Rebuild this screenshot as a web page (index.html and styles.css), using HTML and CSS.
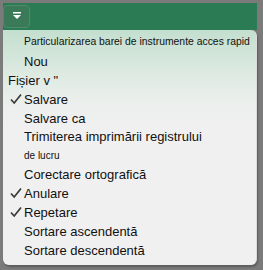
FILE: index.html
```html
<!DOCTYPE html>
<html>
<head>
<meta charset="utf-8">
<link rel="stylesheet" href="styles.css">
</head>
<body>
<div class="app">
  <div class="ribbon">
    <div class="qat-btn">
      <svg width="12" height="10" viewBox="0 0 12 10"><rect x="2" y="1" width="8" height="1.5" fill="#fff"/><path d="M2 4 L10 4 L6 8 Z" fill="#fff"/></svg>
    </div>
  </div>
  <div class="menu">
    <div class="heading">Particularizarea barei de instrumente acces rapid</div>
    <div class="item"><span class="label">Nou</span></div>
    <div class="item outdent"><span class="label">Fișier v "</span></div>
    <div class="item"><span class="check"><svg width="12" height="12" viewBox="0 0 12 12"><path d="M1 6.5 L4.2 10 L11 1.5" fill="none" stroke="#3a3a3a" stroke-width="1.7"/></svg></span><span class="label">Salvare</span></div>
    <div class="item"><span class="label">Salvare ca</span></div>
    <div class="item tight"><span class="label">Trimiterea imprimării registrului</span></div>
    <div class="item small"><span class="label">de lucru</span></div>
    <div class="item"><span class="label">Corectare ortografică</span></div>
    <div class="item"><span class="check"><svg width="12" height="12" viewBox="0 0 12 12"><path d="M1 6.5 L4.2 10 L11 1.5" fill="none" stroke="#3a3a3a" stroke-width="1.7"/></svg></span><span class="label">Anulare</span></div>
    <div class="item"><span class="check"><svg width="12" height="12" viewBox="0 0 12 12"><path d="M1 6.5 L4.2 10 L11 1.5" fill="none" stroke="#3a3a3a" stroke-width="1.7"/></svg></span><span class="label">Repetare</span></div>
    <div class="item"><span class="label">Sortare ascendentă</span></div>
    <div class="item"><span class="label">Sortare descendentă</span></div>
  </div>
</div>
</body>
</html>
```

FILE: styles.css
```css
html, body {
  margin: 0;
  padding: 0;
  background: #7b7b7b;
  width: 263px;
  height: 270px;
  overflow: hidden;
}
.app {
  padding: 3px 6px 0 3px;
  font-family: "Liberation Sans", Arial, sans-serif;
  color: #111;
}
.ribbon {
  height: 27px;
  background: #2b7b55;
  display: flex;
  align-items: flex-start;
  padding: 2px 0 0 0;
  box-sizing: border-box;
}
.qat-btn {
  width: 27px;
  height: 23px;
  border-radius: 4px;
  background: #3a7a59;
  border: 1px solid #4d8b6b;
  box-sizing: border-box;
  display: flex;
  justify-content: center;
  padding-top: 5px;
}
.menu {
  height: 235px;
  box-sizing: border-box;
  padding-top: 2px;
  background: linear-gradient(#c3dfcf 0px, #dbe9e0 40px, #ebefec 70px, #f0f0f0 100px);
  border-radius: 0 6px 6px 6px;
  border-right: 1px solid #dcdcdc;
  box-shadow: 1px 2px 2px rgba(0,0,0,0.25);
}
.heading {
  height: 20px;
  line-height: 20px;
  font-size: 10.4px;
  padding-left: 21px;
  white-space: nowrap;
}
.item {
  height: 19px;
  display: flex;
  align-items: center;
  padding-left: 21px;
  position: relative;
  font-size: 13px;
  white-space: nowrap;
}
.item:first-of-type { height: 20px; }
.item.outdent { padding-left: 5px; height: 19px; }
.item.tight { height: 17px; }
.item.small { height: 20px; font-size: 10px; }
.check {
  position: absolute;
  left: 7px;
  top: 3px;
  display: flex;
}
```
